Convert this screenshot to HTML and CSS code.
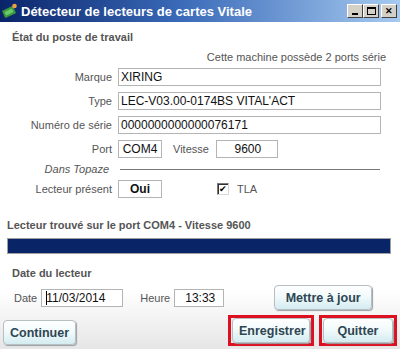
FILE: index.html
```html
<!DOCTYPE html>
<html lang="fr">
<head>
  <meta charset="UTF-8">
  <title>Détecteur de lecteurs de cartes Vitale</title>
  <link rel="stylesheet" href="styles.css">
</head>
<body>
  <div class="window">
    <div class="titlebar">
      <svg class="app-icon" width="16" height="16" viewBox="0 0 16 16">
        <rect x="1" y="5" width="12" height="8" rx="1" fill="#3a9a3a" transform="rotate(-25 7 9)"/>
        <rect x="3" y="7" width="8" height="4" fill="#6cc86c" transform="rotate(-25 7 9)"/>
        <circle cx="12.5" cy="3" r="2.3" fill="#f0a040"/>
      </svg>
      <span class="title">Détecteur de lecteurs de cartes Vitale</span>
      <div class="win-btns">
        <span class="win-btn"><i class="min"></i></span>
        <span class="win-btn"><i class="max"></i></span>
        <span class="win-btn close">&#x2715;</span>
      </div>
    </div>

    <div class="content">
      <h2 class="section-title">État du poste de travail</h2>
      <p class="note">Cette machine possède 2 ports série</p>

      <div class="form">
        <label>Marque</label>
        <div class="field wide">XIRING</div>

        <label>Type</label>
        <div class="field wide">LEC-V03.00-0174BS VITAL'ACT</div>

        <label>Numéro de série</label>
        <div class="field wide">0000000000000076171</div>

        <label>Port</label>
        <div class="inline">
          <div class="field port">COM4</div>
          <span class="sub-label">Vitesse</span>
          <div class="field speed">9600</div>
        </div>

        <label class="group">Dans Topaze</label>
        <div class="rule"></div>

        <label>Lecteur présent</label>
        <div class="inline">
          <div class="field port bold">Oui</div>
          <span class="check"><span class="box">&#x2714;</span>TLA</span>
        </div>
      </div>

      <h3 class="status">Lecteur trouvé sur le port COM4 - Vitesse 9600</h3>
      <div class="progress"><div class="bar"></div></div>

      <h2 class="section-title date-title">Date du lecteur</h2>
      <div class="date-row">
        <span>Date</span>
        <div class="field date"><span class="caret"></span>11/03/2014</div>
        <span class="heure-label">Heure</span>
        <div class="field heure">13:33</div>
        <button class="btn update">Mettre à jour</button>
      </div>

      <div class="actions">
        <button class="btn">Continuer</button>
        <div class="right-actions">
          <span class="mark"><button class="btn">Enregistrer</button></span>
          <span class="mark"><button class="btn">Quitter</button></span>
        </div>
      </div>
    </div>
  </div>
</body>
</html>
```

FILE: styles.css
```css
* {
  margin: 0;
  padding: 0;
  box-sizing: border-box;
}
body {
  font-family: "Liberation Sans", Arial, sans-serif;
  background: #fff;
  color: #555;
}
.window {
  width: 400px;
  height: 349px;
  display: flex;
  flex-direction: column;
  background: linear-gradient(to bottom, #fff 0, #fff 290px, #e6e6e6 349px);
}
.titlebar {
  height: 22px;
  display: flex;
  align-items: center;
  padding-left: 2px;
  background: linear-gradient(to right, #0a246a 0%, #3a6ab8 45%, #a6caf0 100%);
}
.app-icon {
  margin-right: 3px;
}
.title {
  color: #fff;
  font-weight: bold;
  font-size: 13px;
}
.win-btns {
  margin-left: auto;
  margin-right: 3px;
  display: flex;
}
.win-btn {
  width: 16px;
  height: 14px;
  background: #d4d0c8;
  border: 1px solid;
  border-color: #fff #404040 #404040 #fff;
  display: flex;
  align-items: center;
  justify-content: center;
  font-size: 9px;
  font-weight: bold;
  color: #000;
}
.win-btn.close {
  margin-left: 2px;
}
.win-btn .min {
  width: 6px;
  height: 2px;
  background: #000;
  margin-top: 6px;
}
.win-btn .max {
  width: 9px;
  height: 8px;
  border: 1px solid #000;
  border-top-width: 2px;
}
.content {
  flex: 1;
  display: flex;
  flex-direction: column;
}
.section-title {
  font-size: 11px;
  font-weight: bold;
  color: #555;
  margin: 9px 0 0 12px;
  line-height: 13px;
}
.note {
  font-size: 11px;
  text-align: right;
  padding-right: 14px;
  margin-top: 7px;
  line-height: 13px;
}
.form {
  display: grid;
  grid-template-columns: 112px 1fr;
  grid-template-rows: 18px 18px 18px 18px 10px 18px;
  column-gap: 6px;
  row-gap: 6px;
  margin-top: 4px;
  margin-right: 19px;
  font-size: 11px;
}
.form label {
  text-align: right;
  align-self: center;
  color: #555;
}
.form label.group {
  font-style: italic;
  padding-right: 3px;
}
.field {
  border: 1px solid #b4b4b4;
  background: #fff;
  color: #111;
  font-size: 12px;
  line-height: 16px;
  padding-left: 2px;
  height: 18px;
}
.inline {
  display: flex;
  align-items: center;
}
.field.port {
  width: 44px;
  text-align: center;
  padding-left: 0;
}
.field.bold {
  font-weight: bold;
}
.sub-label {
  margin-left: 11px;
  margin-right: 7px;
}
.field.speed {
  width: 62px;
  text-align: center;
}
.rule {
  align-self: center;
  height: 1px;
  background: #777;
  margin-left: 2px;
  margin-right: 1px;
}
.check {
  display: flex;
  align-items: center;
  margin-left: 55px;
  color: #555;
}
.check .box {
  flex: none;
  width: 12px;
  height: 12px;
  border: 1px solid;
  border-color: #7a7a7a #d8d8d8 #d8d8d8 #7a7a7a;
  box-shadow: inset 1px 1px 0 #303030;
  background: #fff;
  color: #000;
  font-size: 9px;
  line-height: 10px;
  text-align: center;
  margin-right: 8px;
}
.status {
  font-size: 11px;
  font-weight: bold;
  color: #555;
  margin: 21px 0 0 7px;
  line-height: 13px;
}
.progress {
  margin: 6px 9px 0 7px;
  height: 16px;
  border: 1px solid #a0a0a0;
  background: #fff;
}
.progress .bar {
  height: 100%;
  background: #0a2468;
}
.date-title {
  margin-top: 13px;
}
.date-row {
  display: flex;
  align-items: center;
  font-size: 11px;
  margin: 5px 0 0 14px;
}
.field.date {
  width: 82px;
  margin-left: 4px;
  padding-left: 4px;
  position: relative;
}
.caret {
  position: absolute;
  left: 4px;
  top: 1px;
  width: 1px;
  height: 14px;
  background: #000;
}
.heure-label {
  margin-left: 17px;
}
.field.heure {
  width: 50px;
  margin-left: 4px;
  text-align: center;
}
.btn {
  font-family: "Liberation Sans", Arial, sans-serif;
  font-weight: bold;
  font-size: 12.5px;
  color: #2e4652;
  border: 1px solid #b6bec2;
  border-radius: 4px;
  background: linear-gradient(to bottom, #ffffff 0%, #f2fafb 45%, #d4ecf1 100%);
  box-shadow: 1px 1px 1px #9aa0a4;
  height: 25px;
  padding: 0 6px;
}
.btn.update {
  margin-left: 50px;
  width: 98px;
}
.actions {
  margin-top: auto;
  margin-bottom: 3px;
  display: flex;
  align-items: flex-end;
  padding: 0 3px;
}
.actions > .btn {
  width: 73px;
  margin-bottom: 1px;
}
.right-actions {
  margin-left: auto;
  display: flex;
  gap: 5px;
}
.mark {
  border: 3px solid #dc1020;
  padding: 0 0 0 1px;
  display: flex;
  height: 31px;
  align-items: center;
}
.mark .btn {
  margin-right: 1px;
}
.mark:first-child .btn {
  width: 78px;
}
.mark:last-child .btn {
  width: 70px;
}
```
